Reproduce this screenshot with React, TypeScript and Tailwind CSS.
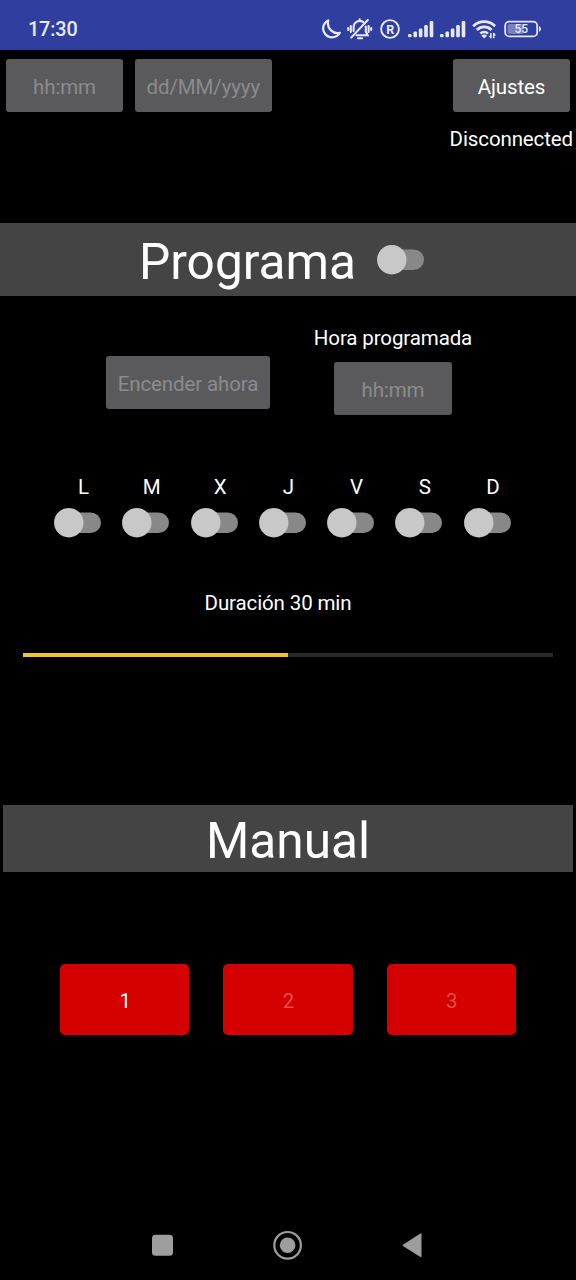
import type { ReactNode } from "react";
import { useState } from "react";

const DAYS = ["L", "M", "X", "J", "V", "S", "D"];

function Toggle({ label }: { label: string }) {
  const [on, setOn] = useState(false);
  return (
    <button
      role="switch"
      aria-checked={on}
      aria-label={label}
      onClick={() => setOn(!on)}
      className="block h-[30px] w-[47px] shrink-0"
    >
      <svg viewBox="0 0 47 30" className="block h-full w-full">
        <rect x="6" y="4.4" width="41" height="20.6" rx="10.3" fill="#888888" />
        <circle cx={on ? 32 : 14.8} cy="14.7" r="14.7" fill="#c8c8c8" />
      </svg>
    </button>
  );
}

function GreyButton({ className, disabled, children }: { className: string; disabled?: boolean; children: ReactNode }) {
  return (
    <button
      disabled={disabled}
      className={`flex h-[53px] items-center justify-center rounded-[3px] bg-[#5a5a5c] whitespace-nowrap ${
        disabled ? "text-[#8b8b8c]" : "text-white"
      } ${className}`}
    >
      {children}
    </button>
  );
}

function SignalBars() {
  return (
    <svg viewBox="0 0 26 18" className="h-[18px] w-[26px]" fill="#e6e9ff">
      <rect x="0" y="14" width="3.6" height="3.2" rx="1.2" />
      <rect x="5.4" y="11.6" width="3.6" height="5.6" rx="1.3" />
      <rect x="10.8" y="8.4" width="3.6" height="8.8" rx="1.3" />
      <rect x="16.2" y="5" width="3.6" height="12.2" rx="1.3" />
      <rect x="21.7" y="1" width="3.6" height="16.2" rx="1.3" />
    </svg>
  );
}

function StatusBar() {
  return (
    <header className="flex h-[50px] items-center bg-[#303f9f] pt-[8px] pr-[34px] pl-[28px] text-[#e6e9ff]">
      <span className="pt-[2px] text-[19.8px] font-medium">17:30</span>
      <div className="ml-auto flex items-center tracking-normal">
        <svg viewBox="0 0 20 20" className="h-5 w-5" fill="none" stroke="#e6e9ff" strokeWidth="2.2" strokeLinejoin="round">
          <path d="M6.2 1.4A8.9 8.9 0 1 0 17.8 13.8C11.6 15.6 4.4 9.7 6.2 1.4Z" />
        </svg>
        <svg viewBox="0 0 26 24" className="ml-[5px] h-6 w-[26px]" fill="none" stroke="#e6e9ff" strokeWidth="2.1" strokeLinecap="round">
          <path d="M6.6 14V10a6.2 6.2 0 0 1 9.6-5M18.8 9.5v5l1.8 3.7H9.5M11 21.2h4M12.7 2.2v1" />
          <path d="M20.8 3 4.2 20.6M3.8 9v6M1.2 11v2M21.6 9v6M24.2 11v2" />
        </svg>
        <svg viewBox="0 0 20 20" className="ml-[7px] h-5 w-5">
          <circle cx="10" cy="10" r="8.9" fill="none" stroke="#e6e9ff" strokeWidth="1.9" />
          <text x="10.2" y="14.5" textAnchor="middle" fontSize="12.5" fontWeight="700" fill="#e6e9ff">R</text>
        </svg>
        <div className="ml-[8px] flex gap-[6px]">
          <SignalBars />
          <SignalBars />
        </div>
        <svg viewBox="0 0 26 20" className="ml-[6px] h-5 w-[26px]" fill="none" stroke="#e6e9ff" strokeWidth="2.8">
          <path d="M1.2 7.2a15.6 15.6 0 0 1 21.9 0M4.8 10.9a10.6 10.6 0 0 1 14.8 0M8.4 14.6a5.5 5.5 0 0 1 7.5 0" />
          <path d="m9.4 16.8 2.8 2.7 2.8-2.7a4 4 0 0 0-5.6 0Z" fill="#e6e9ff" stroke="none" />
          <path d="M18.9 14v5.2M21.7 14v5.2" strokeWidth="1.5" />
          <path d="m16.5 16.8 2.4 2.8v-2.8ZM24.1 16.4 21.7 13.6v2.8Z" fill="#e6e9ff" stroke="none" />
        </svg>
        <svg viewBox="0 0 38 18" className="ml-[6px] h-[18px] w-[38px]">
          <rect x="3.5" y="3.9" width="16" height="10.2" rx="2" fill="#7880c0" />
          <rect x="1.2" y="1.6" width="32" height="14.8" rx="4" fill="none" stroke="#e6e9ff" strokeWidth="1.8" />
          <path d="M35 6.3c2.6.5 2.6 4.9 0 5.4Z" fill="#e6e9ff" />
          <text x="17.2" y="13.3" textAnchor="middle" fontSize="12" fontWeight="500" fill="#e6e9ff">55</text>
        </svg>
      </div>
    </header>
  );
}

export default function App() {
  return (
    <div className="flex h-[1280px] w-[576px] flex-col overflow-hidden bg-black font-['Roboto','Noto_Sans',sans-serif] text-[20.5px] leading-6 tracking-[-0.12px] text-white">
      <StatusBar />

      <div className="mt-[9px] flex px-[6px]">
        <GreyButton disabled className="w-[117px] pt-[2px]">hh:mm</GreyButton>
        <GreyButton disabled className="ml-3 w-[136.5px] pt-[2px]">dd/MM/yyyy</GreyButton>
        <GreyButton className="ml-auto w-[117px] pt-[2px]">Ajustes</GreyButton>
      </div>
      <p className="mt-[15px] pr-[3px] text-right">Disconnected</p>

      <section className="mt-[72px] flex h-[73px] items-center bg-[#444444] pl-[139px]">
        <h1 className="pt-[4px] text-[49.6px] leading-[58px] tracking-normal">Programa</h1>
        <div className="ml-[21px]">
          <Toggle label="Programa" />
        </div>
      </section>

      <div className="mt-[30px] flex items-start pl-[106px]">
        <GreyButton disabled className="mt-[30px] w-[164px] pt-[2px]">Encender ahora</GreyButton>
        <div className="ml-[43px] flex w-[160px] flex-col items-center">
          <p className="whitespace-nowrap">Hora programada</p>
          <GreyButton disabled className="mt-[12px] w-[118px] pt-[3px]">hh:mm</GreyButton>
        </div>
      </div>

      <div className="mt-[60px] flex gap-[21.25px] pl-[54px]">
        {DAYS.map((day) => (
          <div key={day} className="flex w-[47px] flex-col">
            <span className="pl-[12px] text-center">{day}</span>
            <div className="mt-[9px]">
              <Toggle label={day} />
            </div>
          </div>
        ))}
      </div>

      <p className="mt-[53px] pr-[20px] text-center">Duración 30 min</p>
      <div className="mt-[38px] mr-[23.5px] ml-[23.4px] flex h-[4px] bg-[#282828]">
        <div className="w-1/2 bg-[#f0c430]" />
      </div>

      <section className="mx-[3px] mt-[148px] flex h-[67px] items-center justify-center bg-[#444444] pt-[4px]">
        <h1 className="text-[49.6px] leading-[58px] tracking-normal">Manual</h1>
      </section>

      <div className="mt-[92px] flex justify-center gap-[34px]">
        {[1, 2, 3].map((n) => (
          <button
            key={n}
            disabled={n > 1}
            className={`flex h-[71px] w-[129.3px] items-center justify-center rounded-[5px] bg-[#d50000] pt-[2px] pl-px ${
              n > 1 ? "text-[#e24d4d]" : "text-white"
            }`}
          >
            {n}
          </button>
        ))}
      </div>

      <nav className="mt-auto mb-[19px] flex h-[32px] items-center pl-[152px]">
        <svg viewBox="0 0 22 22" className="h-[22px] w-[22px]">
          <rect x="0" y="0.8" width="21" height="21" rx="3.5" fill="#9e9e9e" />
        </svg>
        <svg viewBox="0 0 30 30" className="ml-[99px] h-[30px] w-[30px]">
          <circle cx="14.6" cy="15.3" r="13.3" fill="none" stroke="#9e9e9e" strokeWidth="2.2" />
          <circle cx="14.6" cy="15.3" r="7.8" fill="#9e9e9e" />
        </svg>
        <svg viewBox="0 0 20 26" className="ml-[99px] h-[26px] w-5">
          <path d="M1.3 13.3 18.8 2V24.5Z" fill="#9e9e9e" stroke="#9e9e9e" strokeWidth="1.4" strokeLinejoin="round" />
        </svg>
      </nav>
    </div>
  );
}
